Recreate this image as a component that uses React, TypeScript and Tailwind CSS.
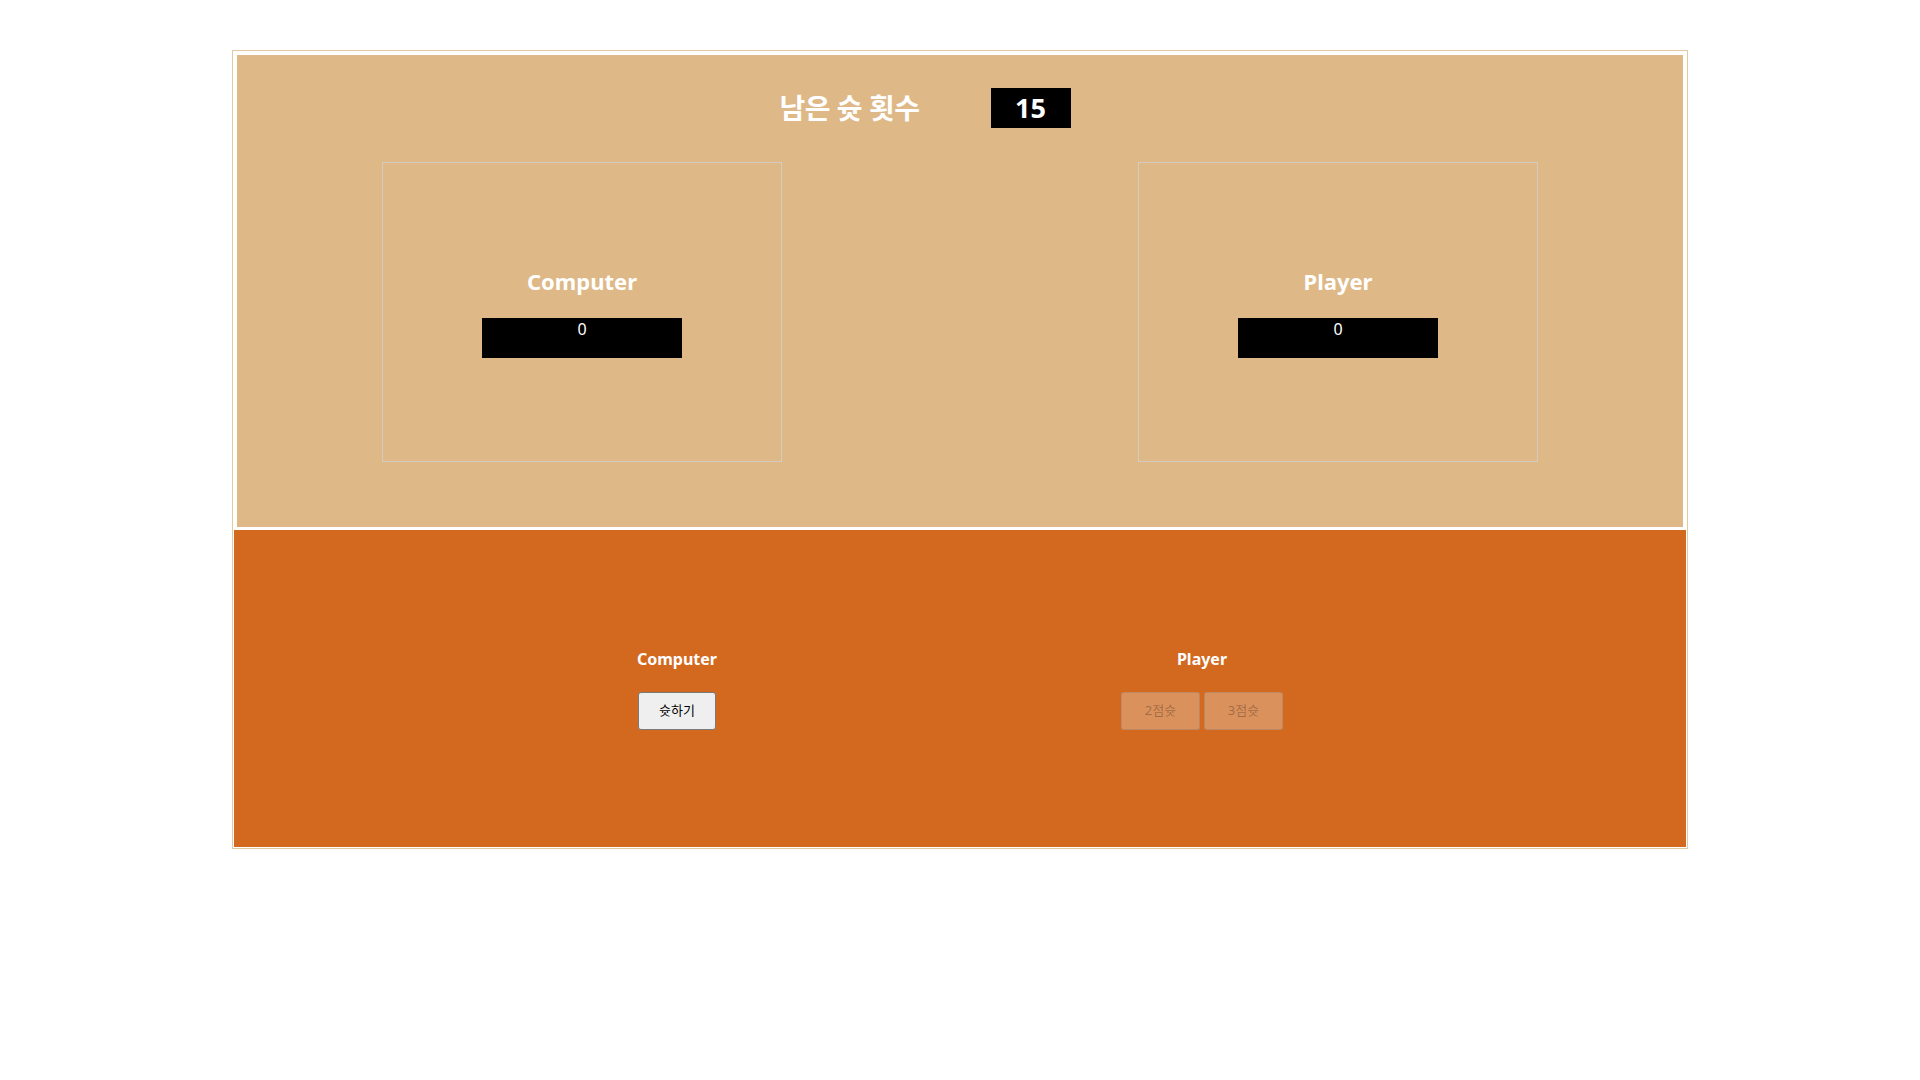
import React from 'react';

const FONT = { fontFamily: '"Noto Sans", "Noto Sans CJK KR", sans-serif' };

function ScoreCard({ name, score }: { name: string; score: number }) {
  return (
    <div className="flex h-[300px] w-[400px] flex-col items-center justify-center border border-[#d3cbc0]">
      <h3 className="text-[22px] font-bold leading-[30px] text-white">{name}</h3>
      <div className="mt-[22px] h-[40px] w-[200px] bg-black text-center text-[16px] leading-[22px] text-white">
        {score}
      </div>
    </div>
  );
}

export default function App() {
  return (
    <div className="min-h-screen bg-white pt-[50px]" style={FONT}>
      <div className="mx-auto w-[1456px] border border-[#e2c9a2] p-px">
        {/* Scoreboard */}
        <section className="h-[478px] border-[3px] border-white bg-[#deb887] pt-[33px]">
          <div className="flex h-[40px] items-center justify-center pr-[70px]">
            <div className="w-[140px] whitespace-nowrap text-center text-[28px] font-bold leading-[40px] tracking-[-0.5px] text-white">
              남은 슛 횟수
            </div>
            <div className="ml-[71px] flex h-[40px] w-[80px] items-center justify-center bg-black text-[27px] font-bold leading-[40px] text-white">
              15
            </div>
          </div>
          <div className="mt-[34px] flex justify-between px-[145px]">
            <ScoreCard name="Computer" score={0} />
            <ScoreCard name="Player" score={0} />
          </div>
        </section>

        {/* Controls */}
        <section className="flex h-[317px] items-center justify-center gap-[404px] bg-[#d2691e]">
          <div className="flex w-[80px] flex-col items-center gap-[21px]">
            <h4 className="text-[16px] font-bold leading-[24px] text-white">Computer</h4>
            <button className="h-[38px] w-[78px] rounded-[3px] border border-[#7a7a7a] bg-[#efefef] text-[13px] text-black">
              슛하기
            </button>
          </div>
          <div className="flex w-[162px] flex-col items-center gap-[21px]">
            <h4 className="text-[16px] font-bold leading-[24px] text-white">Player</h4>
            <div className="flex gap-[4px]">
              <button
                disabled
                className="h-[38px] w-[79px] rounded-[3px] border border-[rgba(118,118,118,0.3)] bg-[rgba(239,239,239,0.3)] text-[13px] text-[rgba(16,16,16,0.3)]"
              >
                2점슛
              </button>
              <button
                disabled
                className="h-[38px] w-[79px] rounded-[3px] border border-[rgba(118,118,118,0.3)] bg-[rgba(239,239,239,0.3)] text-[13px] text-[rgba(16,16,16,0.3)]"
              >
                3점슛
              </button>
            </div>
          </div>
        </section>
      </div>
    </div>
  );
}
